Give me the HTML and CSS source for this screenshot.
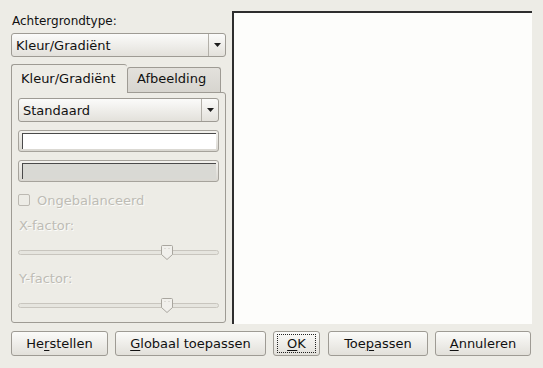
FILE: index.html
```html
<!DOCTYPE html>
<html>
<head>
  <meta charset="UTF-8">
  <title>Achtergrond</title>
  <link rel="stylesheet" href="styles.css">
</head>
<body>
  <div class="dialog">
    <div class="main">
      <div class="left">
        <div class="field-label">Achtergrondtype:</div>
        <div class="combo">
          <span class="combo-text">Kleur/Gradiënt</span>
          <span class="combo-btn">
            <svg width="7" height="4" viewBox="0 0 7 4"><path d="M0 0h7L3.5 4z" fill="#1c1c1c"/></svg>
          </span>
        </div>

        <div class="tabs">
          <div class="tab active">Kleur/Gradiënt</div>
          <div class="tab">Afbeelding</div>
        </div>
        <div class="panel">
          <div class="combo inner">
            <span class="combo-text">Standaard</span>
            <span class="combo-btn">
              <svg width="7" height="4" viewBox="0 0 7 4"><path d="M0 0h7L3.5 4z" fill="#1c1c1c"/></svg>
            </span>
          </div>
          <div class="entry"><div class="entry-field"></div></div>
          <div class="entry disabled"><div class="entry-field"></div></div>

          <div class="check-row">
            <span class="checkbox"></span>
            <span class="dim">Ongebalanceerd</span>
          </div>

          <div class="dim slider-label">X-factor:</div>
          <div class="slider">
            <div class="trough"></div>
            <svg class="thumb" width="12" height="15" viewBox="0 0 12 15">
              <path d="M1.5 0.5h9a1 1 0 0 1 1 1v8l-5.5 5-5.5-5v-8a1 1 0 0 1 1-1z" fill="#f1f0ec" stroke="#a9a69f"/>
              <path d="M4 3v1M8 3v1" stroke="#c9c6bf"/>
            </svg>
          </div>

          <div class="dim slider-label second">Y-factor:</div>
          <div class="slider">
            <div class="trough"></div>
            <svg class="thumb" width="12" height="15" viewBox="0 0 12 15">
              <path d="M1.5 0.5h9a1 1 0 0 1 1 1v8l-5.5 5-5.5-5v-8a1 1 0 0 1 1-1z" fill="#f1f0ec" stroke="#a9a69f"/>
              <path d="M4 3v1M8 3v1" stroke="#c9c6bf"/>
            </svg>
          </div>
        </div>
      </div>

      <div class="preview"></div>
    </div>

    <div class="buttons">
      <button class="btn w-herstellen">He<u>r</u>stellen</button>
      <button class="btn w-globaal"><u>G</u>lobaal toepassen</button>
      <button class="btn w-ok focused"><span class="focus-ring"><u>O</u>K</span></button>
      <button class="btn w-toepassen">Toe<u>p</u>assen</button>
      <button class="btn w-annuleren"><u>A</u>nnuleren</button>
    </div>
  </div>
</body>
</html>
```

FILE: styles.css
```css
* {
  margin: 0;
  padding: 0;
  box-sizing: border-box;
}

body {
  width: 543px;
  height: 368px;
  background: #edece6;
  font-family: "DejaVu Sans", sans-serif;
  font-size: 13px;
  color: #111;
  overflow: hidden;
}

.dialog {
  padding: 11px 11px 0 11px;
}

.main {
  display: flex;
  gap: 6px;
  height: 313px;
}

.left {
  width: 215px;
  display: flex;
  flex-direction: column;
}

.field-label {
  height: 22px;
  font-size: 12px;
  line-height: 16px;
  padding: 2px 0 0 1px;
}

/* Combo box */
.combo {
  height: 24px;
  display: flex;
  align-items: center;
  border: 1px solid #9e9b94;
  border-radius: 3px;
  background: linear-gradient(#fbfbfa, #e3e1db);
}

.combo-text {
  flex: 1;
  padding-left: 4px;
}

.combo-btn {
  width: 17px;
  height: 100%;
  border-left: 1px solid #b3b0a9;
  display: flex;
  align-items: center;
  justify-content: center;
}

/* Notebook */
.tabs {
  display: flex;
  align-items: flex-end;
  margin-top: 7px;
  height: 28px;
}

.tab {
  height: 25px;
  width: 94px;
  padding-left: 9px;
  line-height: 22px;
  border: 1px solid #9e9b94;
  border-bottom: none;
  border-radius: 3px 3px 0 0;
  background: linear-gradient(#e3e1dc, #d7d5cf);
}

.tab.active {
  width: 116px;
  height: 29px;
  line-height: 28px;
  padding-bottom: 1px;
  margin-bottom: -1px;
  border-right: none;
  background: #edece6;
  position: relative;
  z-index: 1;
}

.panel {
  height: 231px;
  border: 1px solid #9e9b94;
  border-radius: 0 3px 3px 3px;
  padding: 5px 6px 0 6px;
  display: flex;
  flex-direction: column;
}

.combo.inner {
  width: 201px;
}

/* Entries */
.entry {
  margin-top: 8px;
  width: 201px;
  height: 22px;
  border: 1px solid #a6a39c;
  border-radius: 3px;
  padding: 2px 2px 2px 3px;
  background: linear-gradient(#f3f2ee, #d9d7d1);
}

.entry-field {
  height: 100%;
  background: #fff;
  border-top: 1px solid #4a4a4a;
  border-left: 1px solid #4a4a4a;
}

.entry.disabled .entry-field {
  background: #d9d9d4;
}

/* Checkbox */
.check-row {
  margin-top: 11px;
  height: 14px;
  display: flex;
  align-items: center;
  gap: 7px;
}

.checkbox {
  width: 12px;
  height: 12px;
  border: 1px solid #bcb9b2;
  border-radius: 2px;
  background: #edece6;
}

.dim {
  color: #bebcb5;
  text-shadow: 1px 1px 0 #fbfbf9;
}

.slider-label {
  margin-top: 11px;
  height: 16px;
  line-height: 16px;
  padding-left: 1px;
}

.slider-label.second {
  margin-top: 12px;
}

/* Scale */
.slider {
  position: relative;
  margin-top: 11px;
  width: 201px;
  height: 14px;
}

.trough {
  position: absolute;
  left: 0;
  right: 0;
  top: 5px;
  height: 5px;
  border: 1px solid #c8c5be;
  border-radius: 3px;
  background: #e6e5df;
}

.thumb {
  position: absolute;
  left: 143px;
  top: 0;
}

/* Preview */
.preview {
  width: 300px;
  height: 313px;
  background: #fdfdfb;
  border-top: 2px solid #2e2e2e;
  border-left: 2px solid #2e2e2e;
}

/* Buttons */
.buttons {
  display: flex;
  margin-top: 7px;
  gap: 7px;
}

.btn {
  height: 25px;
  border: 1px solid #9e9b94;
  border-radius: 3px;
  background: linear-gradient(#fbfbf9, #e2e0da);
  font-family: "DejaVu Sans", sans-serif;
  font-size: 13px;
  color: #111;
  display: flex;
  align-items: center;
  justify-content: center;
}

.btn u {
  text-underline-offset: 2px;
}

.w-herstellen { width: 97px; }
.w-globaal { width: 151px; }
.w-ok { width: 47px; padding: 2px 3px; }
.w-toepassen { width: 100px; margin-left: 1px; }
.w-annuleren { width: 96px; }

.focus-ring {
  width: 100%;
  height: 100%;
  border: 1px dotted #222;
  display: flex;
  align-items: center;
  justify-content: center;
}
```
